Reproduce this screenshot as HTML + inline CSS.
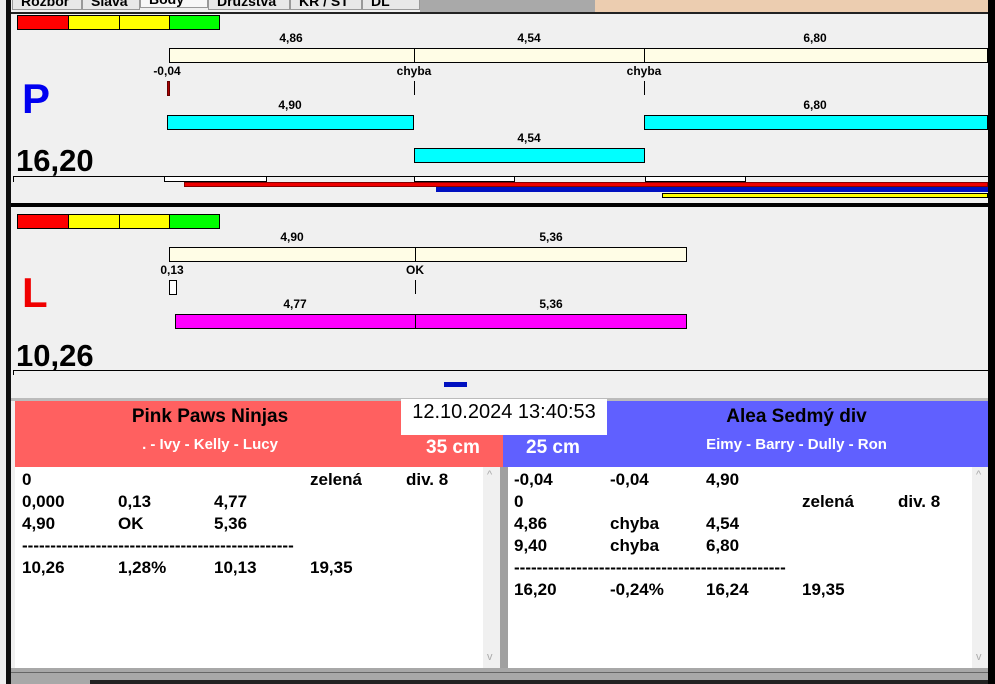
<!DOCTYPE html>
<html><head><meta charset="utf-8"><style>
*{margin:0;padding:0;box-sizing:border-box}
body{width:995px;height:684px;position:relative;overflow:hidden;background:#f0f0f0;font-family:"Liberation Sans",Arial,sans-serif;font-weight:bold;color:#000}
div,span{position:absolute}
.b{border:1px solid #000}
.t{font-size:12px;line-height:14px;text-align:center;width:80px;margin-left:-40px}
.tab{top:-7px;height:17px;background:#e8e8e8;border:1px solid #999;font-size:14px;font-weight:bold;padding-left:8px;line-height:14px;overflow:hidden}
.l{font-size:17px;line-height:20px;white-space:pre}
</style></head><body>
<div style="left:0;top:0;width:995px;height:12px;background:#f0f0f0"></div>
<div style="left:420px;top:0;width:175px;height:12px;background:#a9a9a9"></div>
<div style="left:595px;top:0;width:395px;height:12px;background:#eccdb0"></div>
<div class="tab" style="left:12px;width:70px">Rozbor</div>
<div class="tab" style="left:82px;width:58px">Sláva</div>
<div class="tab" style="left:140px;width:68px;background:#f7f7f7;top:-9px">Body</div>
<div class="tab" style="left:208px;width:82px">Družstva</div>
<div class="tab" style="left:290px;width:72px">KR / ST</div>
<div class="tab" style="left:362px;width:58px">DL</div>
<div style="left:6px;top:0;width:5px;height:684px;background:#111"></div>
<div style="left:988px;top:0;width:7px;height:684px;background:#000"></div>
<div style="left:11px;top:12px;width:977px;height:2px;background:#222"></div>

<div class="b" style="left:17px;top:15px;width:52px;height:15px;background:#f00"></div>
<div class="b" style="left:68px;top:15px;width:52px;height:15px;background:#ff0"></div>
<div class="b" style="left:119px;top:15px;width:51px;height:15px;background:#ff0"></div>
<div class="b" style="left:169px;top:15px;width:51px;height:15px;background:#0f0"></div>
<div class="t" style="left:291px;top:31px">4,86</div>
<div class="t" style="left:529px;top:31px">4,54</div>
<div class="t" style="left:815px;top:31px">6,80</div>
<div class="b" style="left:169px;top:48px;width:246px;height:15px;background:#fffde6"></div>
<div class="b" style="left:414px;top:48px;width:231px;height:15px;background:#fffde6"></div>
<div class="b" style="left:644px;top:48px;width:344px;height:15px;background:#fffde6"></div>
<div class="t" style="left:167px;top:64px">-0,04</div>
<div class="t" style="left:414px;top:64px">chyba</div>
<div class="t" style="left:644px;top:64px">chyba</div>
<div style="left:167px;top:81px;width:3px;height:15px;background:#a00;border:1px solid #600"></div>
<div style="left:414px;top:81px;width:1px;height:14px;background:#000"></div>
<div style="left:644px;top:81px;width:1px;height:14px;background:#000"></div>
<div style="left:22px;top:76px;font-size:42px;line-height:46px;color:#0000f0">P</div>
<div class="t" style="left:290px;top:98px">4,90</div>
<div class="t" style="left:815px;top:98px">6,80</div>
<div class="b" style="left:167px;top:115px;width:247px;height:15px;background:#0ff"></div>
<div class="b" style="left:644px;top:115px;width:344px;height:15px;background:#0ff"></div>
<div class="t" style="left:529px;top:131px">4,54</div>
<div class="b" style="left:414px;top:148px;width:231px;height:15px;background:#0ff"></div>
<div style="left:16px;top:143px;font-size:31px;line-height:36px">16,20</div>
<div style="left:13px;top:176px;width:975px;height:1px;background:#000"></div>
<div style="left:13px;top:176px;width:1px;height:6px;background:#000"></div>
<div class="b" style="left:164px;top:176px;width:103px;height:6px;background:#fff"></div>
<div class="b" style="left:414px;top:176px;width:101px;height:6px;background:#fff"></div>
<div class="b" style="left:645px;top:176px;width:101px;height:6px;background:#fff"></div>
<div style="left:184px;top:182px;width:804px;height:5px;background:#e00;border:1px solid #800"></div>
<div style="left:436px;top:187px;width:552px;height:5px;background:#0010c0"></div>
<div class="b" style="left:662px;top:193px;width:326px;height:5px;background:#ff0"></div>
<div style="left:11px;top:203px;width:977px;height:4px;background:#000"></div>

<div class="b" style="left:17px;top:214px;width:52px;height:15px;background:#f00"></div>
<div class="b" style="left:68px;top:214px;width:52px;height:15px;background:#ff0"></div>
<div class="b" style="left:119px;top:214px;width:51px;height:15px;background:#ff0"></div>
<div class="b" style="left:169px;top:214px;width:51px;height:15px;background:#0f0"></div>
<div class="t" style="left:292px;top:230px">4,90</div>
<div class="t" style="left:551px;top:230px">5,36</div>
<div class="b" style="left:169px;top:247px;width:247px;height:15px;background:#fffde6"></div>
<div class="b" style="left:415px;top:247px;width:272px;height:15px;background:#fffde6"></div>
<div class="t" style="left:172px;top:263px">0,13</div>
<div class="t" style="left:415px;top:263px">OK</div>
<div class="b" style="left:169px;top:280px;width:8px;height:15px;background:#fff"></div>
<div style="left:415px;top:280px;width:1px;height:14px;background:#000"></div>
<div style="left:22px;top:270px;font-size:42px;line-height:46px;color:#f00000">L</div>
<div class="t" style="left:295px;top:297px">4,77</div>
<div class="t" style="left:551px;top:297px">5,36</div>
<div class="b" style="left:175px;top:314px;width:241px;height:15px;background:#f0f"></div>
<div class="b" style="left:415px;top:314px;width:272px;height:15px;background:#f0f"></div>
<div style="left:16px;top:338px;font-size:31px;line-height:36px">10,26</div>
<div style="left:13px;top:370px;width:975px;height:1px;background:#000"></div>
<div style="left:13px;top:370px;width:1px;height:5px;background:#000"></div>
<div style="left:444px;top:382px;width:23px;height:5px;background:#0010c0"></div>
<div style="left:11px;top:398px;width:977px;height:3px;background:#bbb"></div>

<div style="left:15px;top:401px;width:488px;height:66px;background:#ff6060"></div>
<div style="left:503px;top:401px;width:485px;height:66px;background:#6060ff"></div>
<div style="left:15px;top:404px;width:390px;text-align:center;font-size:19px;line-height:26px">Pink Paws Ninjas</div>
<div style="left:15px;top:435px;width:390px;text-align:center;font-size:15px;line-height:20px;color:#fff">. - Ivy - Kelly - Lucy</div>
<div style="left:426px;top:437px;font-size:19px;line-height:22px;color:#fff">35 cm</div>
<div style="left:526px;top:437px;font-size:19px;line-height:22px;color:#fff">25 cm</div>
<div style="left:605px;top:404px;width:383px;text-align:center;font-size:19px;line-height:26px">Alea Sedmý div</div>
<div style="left:605px;top:435px;width:383px;text-align:center;font-size:15px;line-height:20px;color:#fff">Eimy - Barry - Dully - Ron</div>
<div style="left:401px;top:399px;width:206px;height:36px;background:#fff;font-weight:normal;font-size:20px;line-height:26px;text-align:center">12.10.2024 13:40:53</div>

<div style="left:15px;top:467px;width:485px;height:201px;background:#fff"></div>
<div style="left:483px;top:467px;width:17px;height:201px;background:#f0f0f0;color:#aaa;font-size:11px;text-align:center;font-weight:normal"><span style="left:4px;top:2px">^</span><span style="left:4px;top:184px">v</span></div>
<div style="left:500px;top:467px;width:8px;height:201px;background:#a0a0a0"></div>
<div style="left:508px;top:467px;width:480px;height:201px;background:#fff"></div>
<div style="left:972px;top:467px;width:16px;height:201px;background:#f0f0f0;color:#aaa;font-size:11px;text-align:center;font-weight:normal"><span style="left:4px;top:2px">^</span><span style="left:4px;top:184px">v</span></div>

<div class="l" style="left:22px;top:470px">0</div><div class="l" style="left:310px;top:470px">zelená</div><div class="l" style="left:406px;top:470px">div. 8</div>
<div class="l" style="left:22px;top:492px">0,000</div><div class="l" style="left:118px;top:492px">0,13</div><div class="l" style="left:214px;top:492px">4,77</div>
<div class="l" style="left:22px;top:514px">4,90</div><div class="l" style="left:118px;top:514px">OK</div><div class="l" style="left:214px;top:514px">5,36</div>
<div class="l" style="left:22px;top:536px">------------------------------------------------</div>
<div class="l" style="left:22px;top:558px">10,26</div><div class="l" style="left:118px;top:558px">1,28%</div><div class="l" style="left:214px;top:558px">10,13</div><div class="l" style="left:310px;top:558px">19,35</div>

<div class="l" style="left:514px;top:470px">-0,04</div><div class="l" style="left:610px;top:470px">-0,04</div><div class="l" style="left:706px;top:470px">4,90</div>
<div class="l" style="left:514px;top:492px">0</div><div class="l" style="left:802px;top:492px">zelená</div><div class="l" style="left:898px;top:492px">div. 8</div>
<div class="l" style="left:514px;top:514px">4,86</div><div class="l" style="left:610px;top:514px">chyba</div><div class="l" style="left:706px;top:514px">4,54</div>
<div class="l" style="left:514px;top:536px">9,40</div><div class="l" style="left:610px;top:536px">chyba</div><div class="l" style="left:706px;top:536px">6,80</div>
<div class="l" style="left:514px;top:558px">------------------------------------------------</div>
<div class="l" style="left:514px;top:580px">16,20</div><div class="l" style="left:610px;top:580px">-0,24%</div><div class="l" style="left:706px;top:580px">16,24</div><div class="l" style="left:802px;top:580px">19,35</div>

<div style="left:11px;top:668px;width:977px;height:16px;background:#a8a8a8"></div>
<div style="left:11px;top:672px;width:977px;height:1px;background:#666"></div>
<div style="left:90px;top:680px;width:898px;height:4px;background:#222"></div>
</body></html>
